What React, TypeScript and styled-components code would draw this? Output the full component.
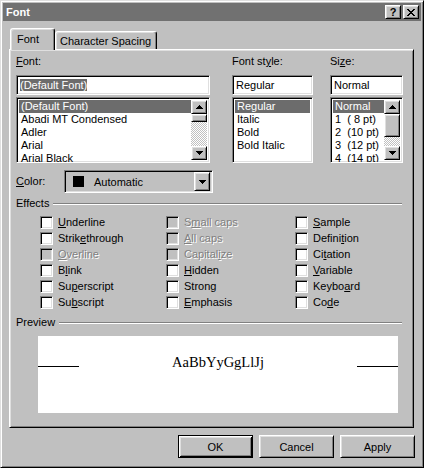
import styled, { createGlobalStyle } from "styled-components";

const GlobalStyle = createGlobalStyle`
  html, body {
    margin: 0;
    padding: 0;
    background: #c0c0c0;
  }
  body {
    font-family: "Liberation Sans", Arial, sans-serif;
    font-size: 11px;
    color: #000;
  }
  * {
    box-sizing: border-box;
  }
`;

const raised = `
  border: 1px solid;
  border-color: #fff #000 #000 #fff;
  box-shadow: inset 1px 1px #dfdfdf, inset -1px -1px #808080;
`;

const sunken = `
  border: 1px solid;
  border-color: #808080 #fff #fff #808080;
  box-shadow: inset 1px 1px #000, inset -1px -1px #dfdfdf;
`;

const Window = styled.div`
  width: 424px;
  height: 468px;
  padding: 2px;
  background: #c0c0c0;
  border: 1px solid;
  border-color: #dfdfdf #000 #000 #dfdfdf;
  box-shadow: inset 1px 1px #fff, inset -1px -1px #808080;
  display: flex;
  flex-direction: column;
`;

const TitleBar = styled.div`
  height: 18px;
  background: #717171;
  display: flex;
  align-items: center;
  padding: 0 2px 0 3px;
`;

const Title = styled.div`
  flex: 1;
  color: #fff;
  font-weight: bold;
  font-size: 11px;
`;

const TitleButton = styled.div<{ $gap?: number }>`
  ${raised}
  width: 16px;
  height: 14px;
  margin-left: ${(p) => p.$gap ?? 0}px;
  background: #c0c0c0;
  display: flex;
  align-items: center;
  justify-content: center;
  font-weight: bold;
  font-size: 11px;
  line-height: 1;
`;

const Body = styled.div`
  padding: 7px 7px 0 6px;
  display: flex;
  flex-direction: column;
`;

const TabStrip = styled.div`
  display: flex;
  align-items: flex-end;
  height: 21px;
  padding-left: 1px;
  position: relative;
  z-index: 1;
`;

const Tab = styled.div<{ $active?: boolean }>`
  height: ${(p) => (p.$active ? 22 : 18)}px;
  margin-bottom: ${(p) => (p.$active ? -1 : 0)}px;
  padding: ${(p) => (p.$active ? "4px 15px 0 6px" : "3px 5px 0 4px")};
  background: #c0c0c0;
  border: 1px solid #fff;
  border-bottom: none;
  border-right-color: #000;
  border-radius: 3px 3px 0 0;
  box-shadow: inset -1px 0 #808080, inset 1px 1px #dfdfdf;
  line-height: 13px;
`;

const Panel = styled.div`
  ${raised}
  width: 405px;
  height: 379px;
  padding: 5px 10px 0 6px;
  display: flex;
  flex-direction: column;
`;

const TopRow = styled.div`
  display: grid;
  grid-template-columns: 216px 98px 73px;
`;

const Field = styled.div<{ $width: number }>`
  width: ${(p) => p.$width}px;
  display: flex;
  flex-direction: column;
`;

const FieldLabel = styled.div`
  line-height: 13px;
  height: 13px;
  margin-bottom: 7px;
`;

const Mnemonic = styled.span`
  text-decoration: underline;
  text-underline-offset: 1px;
`;

const TextBox = styled.div`
  ${sunken}
  height: 20px;
  background: #fff;
  padding: 3px 3px 0;
  line-height: 13px;
  margin-bottom: 2px;
  white-space: nowrap;
`;

const Selection = styled.span`
  background: #6c6c6c;
  color: #fff;
`;

const ListBox = styled.div`
  ${sunken}
  height: 66px;
  background: #fff;
  padding: 2px;
  display: flex;
  overflow: hidden;
`;

const ListItems = styled.div`
  flex: 1;
  display: flex;
  flex-direction: column;
`;

const ListItem = styled.div<{ $selected?: boolean }>`
  height: 13px;
  flex: none;
  line-height: 12px;
  padding-left: 2px;
  white-space: pre;
  background: ${(p) => (p.$selected ? "#6c6c6c" : "transparent")};
  color: ${(p) => (p.$selected ? "#fff" : "#000")};
`;

const ScrollTrack = styled.div`
  width: 16px;
  display: flex;
  flex-direction: column;
  background: repeating-conic-gradient(#c0c0c0 0 25%, #fff 0 50%) 0 0 / 2px 2px;
`;

const ScrollButton = styled.div`
  ${raised}
  height: 14px;
  flex: none;
  background: #c0c0c0;
  display: flex;
  align-items: center;
  justify-content: center;
`;

const Thumb = styled.div<{ $size: number }>`
  ${raised}
  height: ${(p) => p.$size}px;
  flex: none;
  background: #c0c0c0;
`;

const TrackFill = styled.div`
  flex: 1;
`;

const ColorRow = styled.div`
  display: flex;
  align-items: center;
  margin-top: 7px;
`;

const ColorLabel = styled.div`
  width: 48px;
  line-height: 13px;
`;

const ComboBox = styled.div`
  ${sunken}
  width: 149px;
  height: 23px;
  padding: 2px;
  display: flex;
  align-items: center;
  background: #c0c0c0;
`;

const Swatch = styled.div`
  width: 11px;
  height: 11px;
  background: #000;
  margin-left: 6px;
`;

const ComboText = styled.div`
  flex: 1;
  margin-left: 10px;
`;

const ComboButton = styled.div`
  ${raised}
  width: 16px;
  height: 19px;
  background: #c0c0c0;
  display: flex;
  align-items: center;
  justify-content: center;
`;

const GroupHeader = styled.div<{ $top: number }>`
  display: flex;
  align-items: center;
  margin-top: ${(p) => p.$top}px;
  height: 13px;
  line-height: 13px;
`;

const GroupLine = styled.div`
  flex: 1;
  height: 0;
  margin-left: 4px;
  margin-right: 1px;
  border-top: 1px solid #808080;
  border-bottom: 1px solid #fff;
`;

const CheckGrid = styled.div`
  display: grid;
  grid-template-columns: 126px 129px 1fr;
  grid-template-rows: repeat(6, 16px);
  grid-auto-flow: column;
  padding-left: 24px;
  margin-top: 4px;
`;

const CheckRow = styled.div<{ $disabled?: boolean }>`
  display: flex;
  align-items: center;
  color: ${(p) => (p.$disabled ? "#808080" : "#000")};
  text-shadow: ${(p) => (p.$disabled ? "1px 1px #fff" : "none")};
`;

const CheckBox = styled.div<{ $disabled?: boolean }>`
  ${sunken}
  width: 13px;
  height: 13px;
  background: ${(p) => (p.$disabled ? "#c0c0c0" : "#fff")};
  margin-right: 5px;
`;

const PreviewBox = styled.div`
  margin: 7px 0 0 22px;
  width: 360px;
  height: 77px;
  background: #fff;
  display: flex;
  align-items: baseline;
  padding-top: 17px;
`;

const PreviewRule = styled.div`
  width: 41px;
  height: 1px;
  background: #000;
`;

const PreviewText = styled.div`
  flex: 1;
  text-align: center;
  font-family: "Liberation Serif", "Times New Roman", serif;
  font-size: 14.5px;
  line-height: 18px;
`;

const Footer = styled.div`
  display: flex;
  justify-content: flex-end;
  gap: 6px;
  margin: 7px -1px 0 0;
`;

const Button = styled.div<{ $default?: boolean }>`
  width: 75px;
  height: 23px;
  background: #c0c0c0;
  display: flex;
  align-items: center;
  justify-content: center;
  border: 1px solid;
  border-color: ${(p) => (p.$default ? "#000" : "#fff #000 #000 #fff")};
  box-shadow: ${(p) =>
    p.$default
      ? "inset 1px 1px #fff, inset -1px -1px #000, inset 2px 2px #dfdfdf, inset -2px -2px #808080"
      : "inset 1px 1px #dfdfdf, inset -1px -1px #808080"};
`;

const Accel = ({ text, at }: { text: string; at: number }) =>
  at < 0 ? (
    <>{text}</>
  ) : (
    <>
      {text.slice(0, at)}
      <Mnemonic>{text[at]}</Mnemonic>
      {text.slice(at + 1)}
    </>
  );

const Arrow = ({ up }: { up?: boolean }) => (
  <svg width="7" height="4" viewBox="0 0 7 4">
    <path
      d={up ? "M3 0h1v1h1v1h1v1h1v1H0V3h1V2h1V1h1z" : "M0 0h7v1H6v1H5v1H4v1H3V3H2V2H1V1H0z"}
      fill="#000"
    />
  </svg>
);

const ScrollBar = ({ thumb }: { thumb: number }) => (
  <ScrollTrack>
    <ScrollButton>
      <Arrow up />
    </ScrollButton>
    <Thumb $size={thumb} />
    <TrackFill />
    <ScrollButton>
      <Arrow />
    </ScrollButton>
  </ScrollTrack>
);

const List = ({ items, scroll }: { items: string[]; scroll?: number }) => (
  <ListBox>
    <ListItems>
      {items.map((f, i) => (
        <ListItem key={f} $selected={i === 0}>
          {f}
        </ListItem>
      ))}
    </ListItems>
    {scroll ? <ScrollBar thumb={scroll} /> : null}
  </ListBox>
);

const fonts = ["(Default Font)", "Abadi MT Condensed", "Adler", "Arial", "Arial Black"];
const styles = ["Regular", "Italic", "Bold", "Bold Italic"];
const sizes = ["Normal", "1  ( 8 pt)", "2  (10 pt)", "3  (12 pt)", "4  (14 pt)"];

const effects: { label: string; at: number; disabled?: boolean }[] = [
  { label: "Underline", at: 0 },
  { label: "Strikethrough", at: 5 },
  { label: "Overline", at: 0, disabled: true },
  { label: "Blink", at: 1 },
  { label: "Superscript", at: 2 },
  { label: "Subscript", at: 2 },
  { label: "Small caps", at: 1, disabled: true },
  { label: "All caps", at: 0, disabled: true },
  { label: "Capitalize", at: 7, disabled: true },
  { label: "Hidden", at: 0 },
  { label: "Strong", at: -1 },
  { label: "Emphasis", at: 0 },
  { label: "Sample", at: 0 },
  { label: "Definition", at: 6 },
  { label: "Citation", at: 2 },
  { label: "Variable", at: 0 },
  { label: "Keyboard", at: 5 },
  { label: "Code", at: 2 },
];

export default function App() {
  return (
    <>
      <GlobalStyle />
      <Window>
        <TitleBar>
          <Title>Font</Title>
          <TitleButton>?</TitleButton>
          <TitleButton $gap={2}>
            <svg width="8" height="7" viewBox="0 0 8 7">
              <path
                d="M0 0h2v1h1v1h2V1h1V0h2v1H7v1H6v1H5v1h1v1h1v1h1v1H6V6H5V5H3v1H2v1H0V6h1V5h1V4h1V3H2V2H1V1H0z"
                fill="#000"
              />
            </svg>
          </TitleButton>
        </TitleBar>
        <Body>
          <TabStrip>
            <Tab $active>Font</Tab>
            <Tab>Character Spacing</Tab>
          </TabStrip>
          <Panel>
            <TopRow>
              <Field $width={194}>
                <FieldLabel>
                  <Accel text="Font:" at={0} />
                </FieldLabel>
                <TextBox>
                  <Selection>(Default Font)</Selection>
                </TextBox>
                <List items={fonts} scroll={8} />
              </Field>
              <Field $width={81}>
                <FieldLabel>
                  <Accel text="Font style:" at={7} />
                </FieldLabel>
                <TextBox>Regular</TextBox>
                <List items={styles} />
              </Field>
              <Field $width={73}>
                <FieldLabel>
                  <Accel text="Size:" at={2} />
                </FieldLabel>
                <TextBox>Normal</TextBox>
                <List items={sizes} scroll={23} />
              </Field>
            </TopRow>

            <ColorRow>
              <ColorLabel>
                <Accel text="Color:" at={0} />
              </ColorLabel>
              <ComboBox>
                <Swatch />
                <ComboText>Automatic</ComboText>
                <ComboButton>
                  <Arrow />
                </ComboButton>
              </ComboBox>
            </ColorRow>

            <GroupHeader $top={4}>
              Effects
              <GroupLine />
            </GroupHeader>
            <CheckGrid>
              {effects.map((e) => (
                <CheckRow key={e.label} $disabled={e.disabled}>
                  <CheckBox $disabled={e.disabled} />
                  <span>
                    <Accel text={e.label} at={e.at} />
                  </span>
                </CheckRow>
              ))}
            </CheckGrid>

            <GroupHeader $top={6}>
              Preview
              <GroupLine />
            </GroupHeader>
            <PreviewBox>
              <PreviewRule />
              <PreviewText>AaBbYyGgLlJj</PreviewText>
              <PreviewRule />
            </PreviewBox>
          </Panel>
          <Footer>
            <Button $default>OK</Button>
            <Button>Cancel</Button>
            <Button>Apply</Button>
          </Footer>
        </Body>
      </Window>
    </>
  );
}
